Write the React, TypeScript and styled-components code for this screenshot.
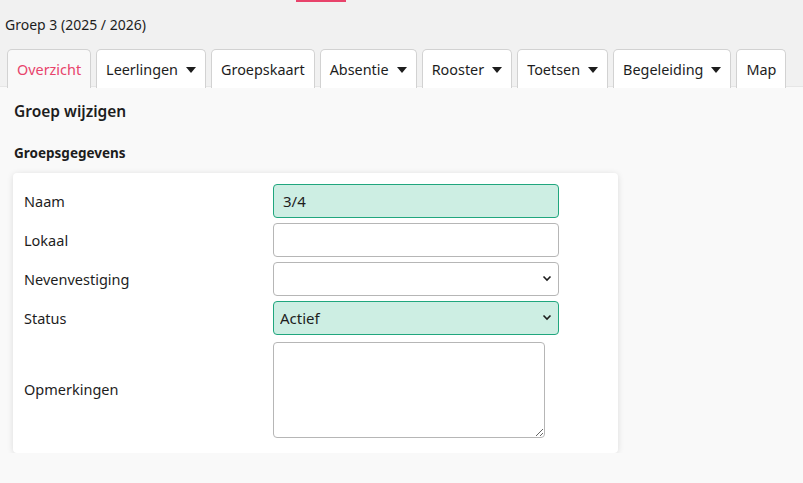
import React from "react";
import styled, { createGlobalStyle } from "styled-components";

const Global = createGlobalStyle`
  html, body { margin: 0; padding: 0; background: #f9f9f9; }
  body { font-family: "Noto Sans", "Open Sans", sans-serif; color: #1d1d1d; }
  * { box-sizing: border-box; }
`;

const Header = styled.header`
  background: #f1f1f1;
  border-bottom: 1px solid #e6e6e6;
  display: flex;
  flex-direction: column;
`;

const AccentRow = styled.div`
  height: 2px;
  flex-shrink: 0;
  display: flex;
  padding-left: 296px;
`;

const Accent = styled.span`
  width: 50px;
  height: 2px;
  background: #e8436b;
`;

const Title = styled.div`
  font-size: 14px;
  line-height: 20px;
  padding: 13px 0 0 5px;
  height: 47px;
  flex-shrink: 0;
`;

const Tabs = styled.nav`
  display: flex;
  gap: 5px;
  padding-left: 7px;
  height: 38px;
  margin-bottom: -1px;
  flex-shrink: 0;
`;

const Tab = styled.div<{ $active?: boolean }>`
  display: flex;
  align-items: center;
  gap: 8px;
  height: 39px;
  padding: 0 9px;
  border: 1px solid #d2d2d2;
  border-bottom: none;
  border-radius: 5px 5px 0 0;
  background: ${(p) => (p.$active ? "#f9f9f9" : "#ffffff")};
  color: ${(p) => (p.$active ? "#e8436b" : "#1d1d1d")};
  font-size: 14.4px;
  position: relative;
  z-index: 1;
`;

const Caret = styled.span`
  width: 0;
  height: 0;
  border-left: 5px solid transparent;
  border-right: 5px solid transparent;
  border-top: 6px solid #1d1d1d;
  margin-top: 1px;
`;

const Content = styled.main`
  padding: 12px 0 0 13px;
`;

const PageTitle = styled.h1`
  margin: 0 0 0 1px;
  font-size: 15.5px;
  font-weight: 600;
  line-height: 24px;
`;

const SectionTitle = styled.h2`
  margin: 20px 0 0 1px;
  font-size: 13.5px;
  font-weight: 700;
  line-height: 20px;
`;

const Card = styled.section`
  margin-top: 10px;
  width: 605px;
  background: #fff;
  border-radius: 4px;
  box-shadow: 0 1px 6px rgba(0, 0, 0, 0.12);
  padding: 11px 0 15px 11px;
  display: flex;
  flex-direction: column;
  gap: 5px;
`;

const Row = styled.div`
  display: grid;
  grid-template-columns: 249px 1fr;
  align-items: center;
`;

const Label = styled.label`
  font-size: 14.5px;
`;

const fieldBase = `
  font-family: "Noto Sans", "Open Sans", sans-serif;
  font-size: 15px;
  color: #1d1d1d;
  border-radius: 4px;
  outline: none;
`;

const Input = styled.input<{ $filled?: boolean }>`
  ${fieldBase}
  width: 286px;
  height: 34px;
  padding: 0 9px;
  background: ${(p) => (p.$filled ? "#cdeee3" : "#fff")};
  border: 1px solid ${(p) => (p.$filled ? "#20a67e" : "#b6b6b6")};
`;

const SelectWrap = styled.div`
  position: relative;
  width: 286px;
`;

const Select = styled.select<{ $filled?: boolean }>`
  ${fieldBase}
  appearance: none;
  -webkit-appearance: none;
  width: 286px;
  height: 34px;
  padding: 0 6px;
  background: ${(p) => (p.$filled ? "#cdeee3" : "#fff")};
  border: 1px solid ${(p) => (p.$filled ? "#20a67e" : "#b6b6b6")};
`;

const Chevron = styled.svg`
  position: absolute;
  right: 7px;
  top: 13px;
  pointer-events: none;
`;

const TextArea = styled.textarea`
  ${fieldBase}
  display: block;
  width: 272px;
  height: 96px;
  margin-top: 2px;
  border: 1px solid #b6b6b6;
  background: #fff;
  resize: both;
`;

const ChevronIcon = () => (
  <Chevron width="10" height="7" viewBox="0 0 10 7">
    <path d="M1.5 1.5 L5 5 L8.5 1.5" fill="none" stroke="#1d1d1d" strokeWidth="1.6" />
  </Chevron>
);

const tabs = [
  { name: "Overzicht", active: true },
  { name: "Leerlingen", caret: true },
  { name: "Groepskaart" },
  { name: "Absentie", caret: true },
  { name: "Rooster", caret: true },
  { name: "Toetsen", caret: true },
  { name: "Begeleiding", caret: true },
  { name: "Map" },
];

export default function App() {
  return (
    <>
      <Global />
      <Header>
        <AccentRow>
          <Accent />
        </AccentRow>
        <Title>Groep 3 (2025 / 2026)</Title>
        <Tabs>
          {tabs.map((t) => (
            <Tab key={t.name} $active={t.active}>
              {t.name}
              {t.caret && <Caret />}
            </Tab>
          ))}
        </Tabs>
      </Header>
      <Content>
        <PageTitle>Groep wijzigen</PageTitle>
        <SectionTitle>Groepsgegevens</SectionTitle>
        <Card>
          <Row>
            <Label>Naam</Label>
            <Input $filled defaultValue="3/4" />
          </Row>
          <Row>
            <Label>Lokaal</Label>
            <Input />
          </Row>
          <Row>
            <Label>Nevenvestiging</Label>
            <SelectWrap>
              <Select defaultValue="">
                <option value=""></option>
              </Select>
              <ChevronIcon />
            </SelectWrap>
          </Row>
          <Row>
            <Label>Status</Label>
            <SelectWrap>
              <Select $filled defaultValue="actief">
                <option value="actief">Actief</option>
              </Select>
              <ChevronIcon />
            </SelectWrap>
          </Row>
          <Row>
            <Label>Opmerkingen</Label>
            <TextArea />
          </Row>
        </Card>
      </Content>
    </>
  );
}
